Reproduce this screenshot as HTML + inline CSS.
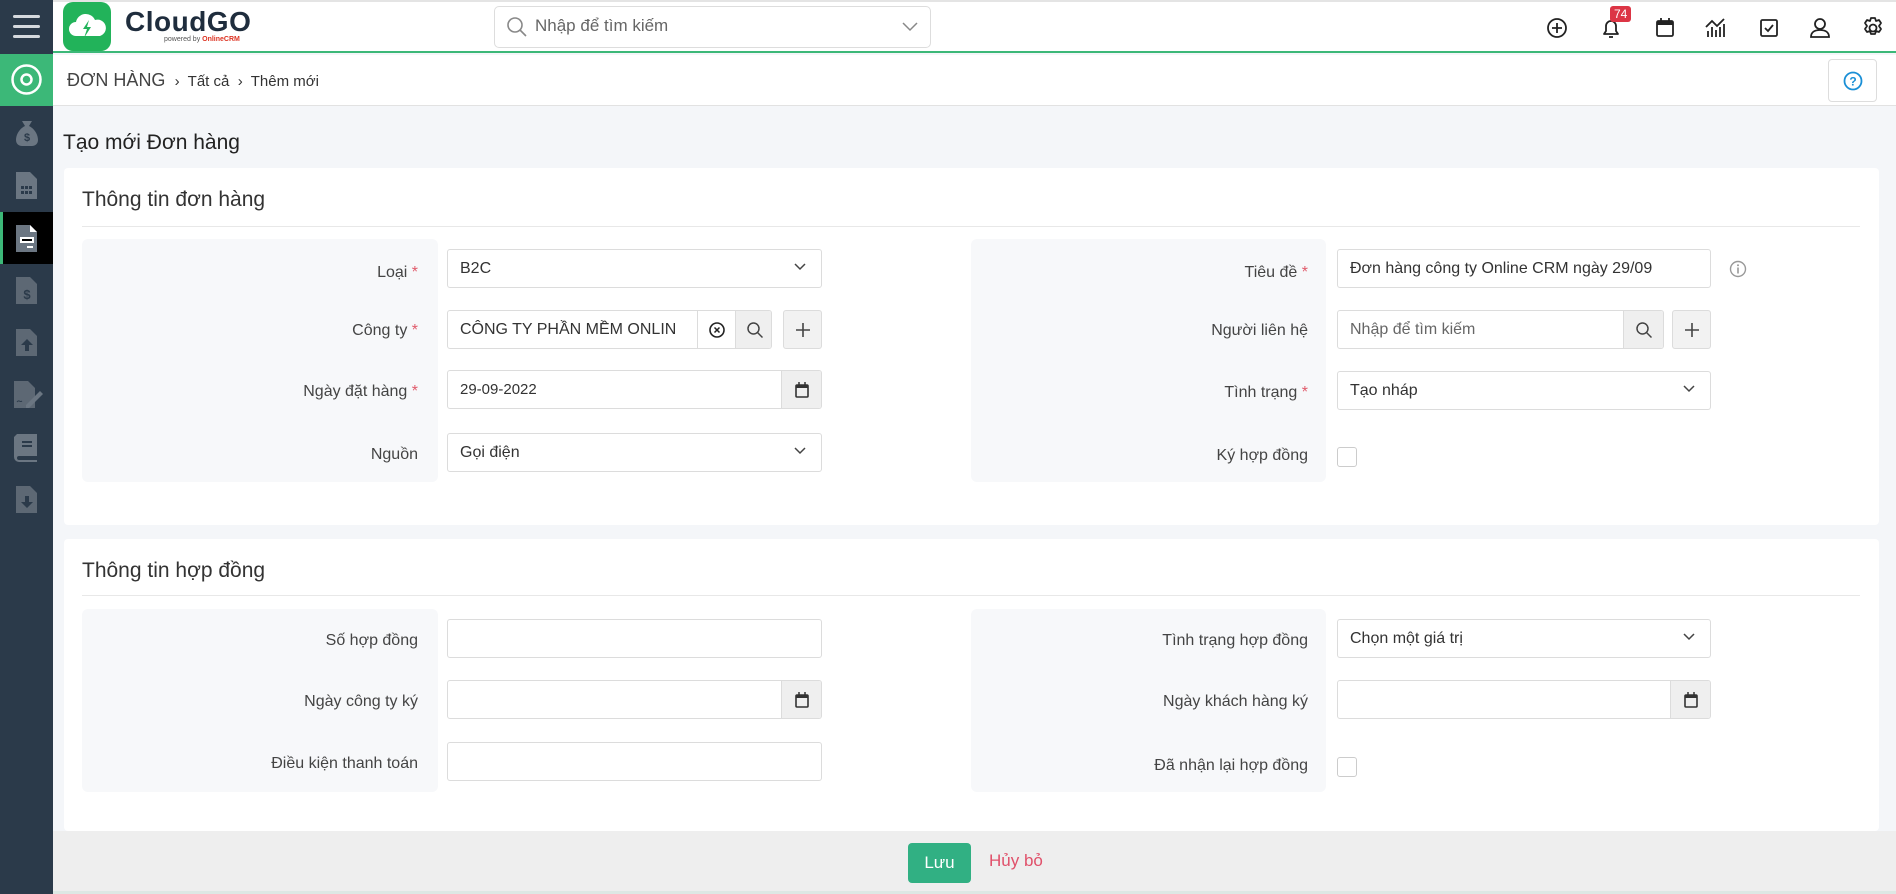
<!DOCTYPE html>
<html><head><meta charset="utf-8">
<style>
*{box-sizing:border-box;margin:0;padding:0}
body{width:1896px;height:894px;overflow:hidden;background:#f4f6f9;font-family:"Liberation Sans","Noto Sans CJK SC",sans-serif;color:#333;position:relative}
.a{position:absolute}
.side{left:0;top:0;width:53px;height:894px;background:#2b3a4a}
.top{left:53px;top:0;width:1843px;height:53px;background:#fff;border-bottom:2px solid #3cb878;border-top:2px solid #e4e4e4}
.bc{left:53px;top:55px;width:1843px;height:51px;background:#fff;border-bottom:1px solid #e2e2e2}
.card{background:#fff;border-radius:4px;left:64px;width:1815px}
.gray{background:#f7f8fa;border-radius:6px}
.lbl{font-size:16px;color:#444;text-align:right;width:360px}
.lbl b{color:#e05b6b;font-weight:normal}
.inp{background:#fff;border:1px solid #dcdcdc;border-radius:3px;height:39px;font-size:16px;color:#333;padding:0 12px;line-height:37px;overflow:hidden;white-space:nowrap}
.addon{background:#efefef;border-left:1px solid #dcdcdc;position:absolute;top:0;height:37px;width:44px;display:flex;align-items:center;justify-content:center}
.chev{position:absolute;right:14px;top:12px}
.h2{font-size:21px;color:#333}
.icon{top:15px}
.sico{left:14px;width:26px;height:26px}
</style></head><body>
<div class="a side"></div>
<!-- hamburger -->
<div class="a" style="left:13px;top:15px;width:27px;height:3px;background:#d5d9de;border-radius:2px"></div>
<div class="a" style="left:13px;top:25px;width:27px;height:3px;background:#d5d9de;border-radius:2px"></div>
<div class="a" style="left:13px;top:35px;width:27px;height:3px;background:#d5d9de;border-radius:2px"></div>
<div class="a" style="left:0;top:54px;width:53px;height:52px;background:#3cb878"></div>
<svg class="a" style="left:10px;top:63px" width="33" height="33"><circle cx="16.5" cy="16.5" r="14" fill="none" stroke="#fff" stroke-width="2.5"/><circle cx="16.5" cy="16.5" r="5" fill="none" stroke="#fff" stroke-width="2.5"/></svg>
<div class="a" style="left:0;top:212px;width:53px;height:52px;background:#000"></div>
<div class="a" style="left:0;top:212px;width:3px;height:52px;background:#3cb878"></div>
<!-- sidebar icons -->
<svg class="a" style="left:14px;top:119px" width="26" height="28"><path d="M8 2h10l-3 5h-4z M11 7h4c6 3 9 9 9 14 0 4-3 6-6 6H8c-3 0-6-2-6-6 0-5 3-11 9-14z" fill="#6b7682"/><text x="13" y="22" font-size="11" fill="#2b3a4a" text-anchor="middle" font-weight="bold">$</text></svg>
<svg class="a" style="left:16px;top:172px" width="22" height="27"><path d="M0 0h14l7 7v20H0z" fill="#6b7682"/><g fill="#2b3a4a"><rect x="5" y="14" width="3" height="3"/><rect x="9" y="14" width="3" height="3"/><rect x="13" y="14" width="3" height="3"/><rect x="5" y="19" width="3" height="3"/><rect x="9" y="19" width="3" height="3"/><rect x="13" y="19" width="3" height="3"/></g></svg>
<svg class="a" style="left:16px;top:225px" width="22" height="27"><path d="M0 0h14l7 7v20H0z" fill="#6b7682"/><path d="M14 0l7 7h-7z" fill="#fff"/><rect x="4" y="12" width="14" height="6" fill="#fff"/><rect x="6" y="14" width="10" height="2" fill="#000"/><rect x="11" y="21" width="6" height="2" fill="#fff"/></svg>
<svg class="a" style="left:16px;top:277px" width="22" height="27"><path d="M0 0h14l7 7v20H0z" fill="#5d6874"/><text x="11" y="22" font-size="13" fill="#2b3a4a" text-anchor="middle" font-weight="bold">$</text></svg>
<svg class="a" style="left:16px;top:329px" width="22" height="27"><path d="M0 0h14l7 7v20H0z" fill="#5d6874"/><path d="M11 10l-6 6h4v6h4v-6h4z" fill="#2b3a4a"/></svg>
<svg class="a" style="left:14px;top:381px" width="30" height="28"><path d="M0 0h14l7 7v20H0z" fill="#5d6874"/><path d="M12 24l14-14 3 3-14 14h-3z" fill="#6b7682"/><path d="M3 21c2-3 3 1 5-1" stroke="#2b3a4a" fill="none"/></svg>
<svg class="a" style="left:14px;top:434px" width="26" height="28"><path d="M3 0h20v22H5a2 2 0 000 4h18v2H5a5 5 0 01-5-5V3z" fill="#6b7682"/><rect x="8" y="7" width="10" height="2" fill="#2b3a4a"/><rect x="8" y="11" width="10" height="2" fill="#2b3a4a"/></svg>
<svg class="a" style="left:16px;top:486px" width="22" height="27"><path d="M0 0h14l7 7v20H0z" fill="#5d6874"/><path d="M11 22l-6-6h4v-6h4v6h4z" fill="#2b3a4a"/></svg>

<div class="a top"></div>
<!-- logo -->
<div class="a" style="left:63px;top:2px;width:48px;height:49px;background:#22b35a;border-radius:10px"></div>
<svg class="a" style="left:67px;top:12px" width="40" height="30"><path d="M9 24a7 7 0 010-14 10 10 0 0119-2 7 7 0 015 16z" fill="#fff"/><path d="M22 8l-6 9h4l-3 9 7-11h-4z" fill="#22b35a"/></svg>
<div class="a" style="left:125px;top:6px;font-size:28px;font-weight:bold;color:#1f2d3d;letter-spacing:0.5px">CloudGO</div>
<div class="a" style="left:164px;top:36px;font-size:7px;color:#555">powered by <span style="color:#d32;font-weight:bold">OnlineCRM</span></div>
<!-- search -->
<div class="a" style="left:494px;top:6px;width:437px;height:42px;border:1px solid #ddd;border-radius:5px;background:#fff"></div>
<svg class="a" style="left:506px;top:16px" width="22" height="22"><circle cx="9" cy="9" r="7" fill="none" stroke="#888" stroke-width="1.6"/><path d="M14 14l6 6" stroke="#888" stroke-width="1.6"/></svg>
<div class="a" style="left:535px;top:16px;font-size:17px;color:#666">Nhập để tìm kiếm</div>
<svg class="a" style="left:902px;top:22px" width="16" height="10"><path d="M1 1l7 7 7-7" fill="none" stroke="#888" stroke-width="1.5"/></svg>
<!-- top icons -->
<svg class="a icon" style="left:1546px" width="22" height="24"><circle cx="11" cy="13" r="9" fill="none" stroke="#222" stroke-width="1.8"/><path d="M11 8v10M6 13h10" stroke="#222" stroke-width="1.8"/></svg>
<svg class="a icon" style="left:1600px" width="22" height="26"><path d="M4 19h14l-2-3v-5a5 5 0 00-10 0v5z" fill="none" stroke="#222" stroke-width="1.8" stroke-linejoin="round"/><path d="M9 22h4" stroke="#222" stroke-width="1.8"/></svg>
<div class="a" style="left:1610px;top:6px;background:#dc3545;color:#fff;font-size:12px;padding:1px 4px;border-radius:3px;line-height:14px">74</div>
<svg class="a icon" style="left:1654px" width="22" height="24"><rect x="3" y="6" width="16" height="15" rx="1.5" fill="none" stroke="#222" stroke-width="1.8"/><rect x="3" y="6" width="16" height="4" fill="#222"/><path d="M7 3v4M15 3v4" stroke="#222" stroke-width="1.8"/></svg>
<svg class="a icon" style="left:1704px" width="24" height="24"><path d="M2 12l6-6 5 5 7-7" fill="none" stroke="#222" stroke-width="1.8"/><path d="M4 16v6M8 12v10M12 15v7M16 12v10M20 9v13" stroke="#222" stroke-width="1.8"/></svg>
<svg class="a icon" style="left:1758px" width="22" height="24"><rect x="3" y="5" width="16" height="16" rx="1.5" fill="none" stroke="#222" stroke-width="1.8"/><path d="M7 13l3 3 5-6" fill="none" stroke="#222" stroke-width="1.8"/></svg>
<svg class="a icon" style="left:1809px" width="22" height="24"><circle cx="11" cy="9" r="5" fill="none" stroke="#222" stroke-width="1.8"/><path d="M2 22c0-5 4-7 9-7s9 2 9 7z" fill="none" stroke="#222" stroke-width="1.8"/></svg>
<svg class="a icon" style="left:1861px" width="24" height="24"><circle cx="12" cy="13" r="3.5" fill="none" stroke="#222" stroke-width="1.8"/><path d="M10 3h4l1 3 3-1 2 3-2 3 2 3-2 3-3-1-1 3h-4l-1-3-3 1-2-3 2-3-2-3 2-3 3 1z" fill="none" stroke="#222" stroke-width="1.8" stroke-linejoin="round"/></svg>

<!-- breadcrumb -->
<div class="a bc"></div>
<div class="a" style="left:67px;top:70px;font-size:18px;color:#444">ĐƠN HÀNG <span style="font-size:15px;color:#333">&nbsp;›&nbsp; Tất cả &nbsp;›&nbsp; Thêm mới</span></div>
<div class="a" style="left:1828px;top:59px;width:49px;height:43px;border:1px solid #ddd;border-radius:4px;background:#fff"></div>
<svg class="a" style="left:1842px;top:70px" width="22" height="22"><circle cx="11" cy="11" r="8.5" fill="none" stroke="#1a8fd6" stroke-width="1.8"/><text x="11" y="15.5" font-size="12" font-weight="bold" fill="#1a8fd6" text-anchor="middle" font-family="Liberation Sans">?</text></svg>

<div class="a" style="left:63px;top:131px;font-size:21px;color:#222">Tạo mới Đơn hàng</div>

<!-- card 1 -->
<div class="a card" style="top:168px;height:357px"></div>
<div class="a h2" style="left:82px;top:188px">Thông tin đơn hàng</div>
<div class="a" style="left:82px;top:226px;width:1778px;height:1px;background:#e8e8e8"></div>
<div class="a gray" style="left:82px;top:239px;width:356px;height:243px"></div>
<div class="a gray" style="left:971px;top:239px;width:355px;height:243px"></div>

<div class="a lbl" style="left:58px;top:264px">Loại <b>*</b></div>
<div class="a inp" style="left:447px;top:249px;width:375px">B2C<svg class="chev" width="14" height="10"><path d="M2 2l5 5 5-5" fill="none" stroke="#444" stroke-width="1.5"/></svg></div>
<div class="a lbl" style="left:58px;top:322px">Công ty <b>*</b></div>
<div class="a inp" style="left:447px;top:310px;width:325px">CÔNG TY PHẦN MỀM ONLIN
<div class="addon" style="left:249px;background:#fff;width:38px"><svg width="18" height="18"><circle cx="9" cy="9" r="7" fill="none" stroke="#222" stroke-width="1.6"/><path d="M6.5 6.5l5 5M11.5 6.5l-5 5" stroke="#222" stroke-width="1.5"/></svg></div>
<div class="addon" style="left:287px;width:38px"><svg width="18" height="18"><circle cx="7.5" cy="7.5" r="5.5" fill="none" stroke="#444" stroke-width="1.5"/><path d="M11.5 11.5l5 5" stroke="#444" stroke-width="1.5"/></svg></div></div>
<div class="a inp" style="left:783px;top:310px;width:39px;background:#f2f2f2;padding:0"><svg style="position:absolute;left:10px;top:10px" width="18" height="18"><path d="M9 2v14M2 9h14" stroke="#444" stroke-width="1.6"/></svg></div>
<div class="a lbl" style="left:58px;top:383px">Ngày đặt hàng <b>*</b></div>
<div class="a inp" style="left:447px;top:370px;width:375px;font-size:15px">29-09-2022<div class="addon" style="right:0;width:40px"><svg width="16" height="18"><rect x="2" y="4" width="12" height="12" rx="1" fill="none" stroke="#333" stroke-width="1.6"/><rect x="2" y="4" width="12" height="3" fill="#333"/><path d="M5 1v4M11 1v4" stroke="#333" stroke-width="1.5"/></svg></div></div>
<div class="a lbl" style="left:58px;top:446px">Nguồn</div>
<div class="a inp" style="left:447px;top:433px;width:375px">Gọi điện<svg class="chev" width="14" height="10"><path d="M2 2l5 5 5-5" fill="none" stroke="#444" stroke-width="1.5"/></svg></div>

<div class="a lbl" style="left:948px;top:264px">Tiêu đề <b>*</b></div>
<div class="a inp" style="left:1337px;top:249px;width:374px">Đơn hàng công ty Online CRM ngày 29/09</div>
<svg class="a" style="left:1729px;top:260px" width="18" height="18"><circle cx="9" cy="9" r="7.5" fill="none" stroke="#999" stroke-width="1.4"/><rect x="8.2" y="7.5" width="1.6" height="6" fill="#999"/><circle cx="9" cy="5.2" r="1" fill="#999"/></svg>
<div class="a lbl" style="left:948px;top:322px">Người liên hệ</div>
<div class="a inp" style="left:1337px;top:310px;width:327px;color:#666">Nhập để tìm kiếm<div class="addon" style="right:0;width:40px"><svg width="18" height="18"><circle cx="7.5" cy="7.5" r="5.5" fill="none" stroke="#444" stroke-width="1.5"/><path d="M11.5 11.5l5 5" stroke="#444" stroke-width="1.5"/></svg></div></div>
<div class="a inp" style="left:1672px;top:310px;width:39px;background:#f2f2f2;padding:0"><svg style="position:absolute;left:10px;top:10px" width="18" height="18"><path d="M9 2v14M2 9h14" stroke="#444" stroke-width="1.6"/></svg></div>
<div class="a lbl" style="left:948px;top:384px">Tình trạng <b>*</b></div>
<div class="a inp" style="left:1337px;top:371px;width:374px">Tạo nháp<svg class="chev" width="14" height="10"><path d="M2 2l5 5 5-5" fill="none" stroke="#444" stroke-width="1.5"/></svg></div>
<div class="a lbl" style="left:948px;top:447px">Ký hợp đồng</div>
<div class="a" style="left:1337px;top:447px;width:20px;height:20px;border:1px solid #ccc;border-radius:3px;background:#fff"></div>

<!-- card 2 -->
<div class="a card" style="top:539px;height:292px"></div>
<div class="a h2" style="left:82px;top:559px">Thông tin hợp đồng</div>
<div class="a" style="left:82px;top:595px;width:1778px;height:1px;background:#e8e8e8"></div>
<div class="a gray" style="left:82px;top:609px;width:356px;height:183px"></div>
<div class="a gray" style="left:971px;top:609px;width:355px;height:183px"></div>

<div class="a lbl" style="left:58px;top:632px">Số hợp đồng</div>
<div class="a inp" style="left:447px;top:619px;width:375px"></div>
<div class="a lbl" style="left:58px;top:693px">Ngày công ty ký</div>
<div class="a inp" style="left:447px;top:680px;width:375px"><div class="addon" style="right:0;width:40px"><svg width="16" height="18"><rect x="2" y="4" width="12" height="12" rx="1" fill="none" stroke="#333" stroke-width="1.6"/><rect x="2" y="4" width="12" height="3" fill="#333"/><path d="M5 1v4M11 1v4" stroke="#333" stroke-width="1.5"/></svg></div></div>
<div class="a lbl" style="left:58px;top:755px">Điều kiện thanh toán</div>
<div class="a inp" style="left:447px;top:742px;width:375px"></div>

<div class="a lbl" style="left:948px;top:632px">Tình trạng hợp đồng</div>
<div class="a inp" style="left:1337px;top:619px;width:374px">Chọn một giá trị<svg class="chev" width="14" height="10"><path d="M2 2l5 5 5-5" fill="none" stroke="#444" stroke-width="1.5"/></svg></div>
<div class="a lbl" style="left:948px;top:693px">Ngày khách hàng ký</div>
<div class="a inp" style="left:1337px;top:680px;width:374px"><div class="addon" style="right:0;width:40px"><svg width="16" height="18"><rect x="2" y="4" width="12" height="12" rx="1" fill="none" stroke="#333" stroke-width="1.6"/><rect x="2" y="4" width="12" height="3" fill="#333"/><path d="M5 1v4M11 1v4" stroke="#333" stroke-width="1.5"/></svg></div></div>
<div class="a lbl" style="left:948px;top:757px">Đã nhận lại hợp đồng</div>
<div class="a" style="left:1337px;top:757px;width:20px;height:20px;border:1px solid #ccc;border-radius:3px;background:#fff"></div>

<!-- footer -->
<div class="a" style="left:53px;top:831px;width:1843px;height:60px;background:#eee"></div>
<div class="a" style="left:53px;top:891px;width:1843px;height:3px;background:#dde8e4"></div>
<div class="a" style="left:908px;top:843px;width:63px;height:40px;background:#31b083;border-radius:4px;color:#fff;font-size:17px;text-align:center;line-height:40px">Lưu</div>
<div class="a" style="left:989px;top:851px;font-size:17px;color:#e0506a">Hủy bỏ</div>
</body></html>
